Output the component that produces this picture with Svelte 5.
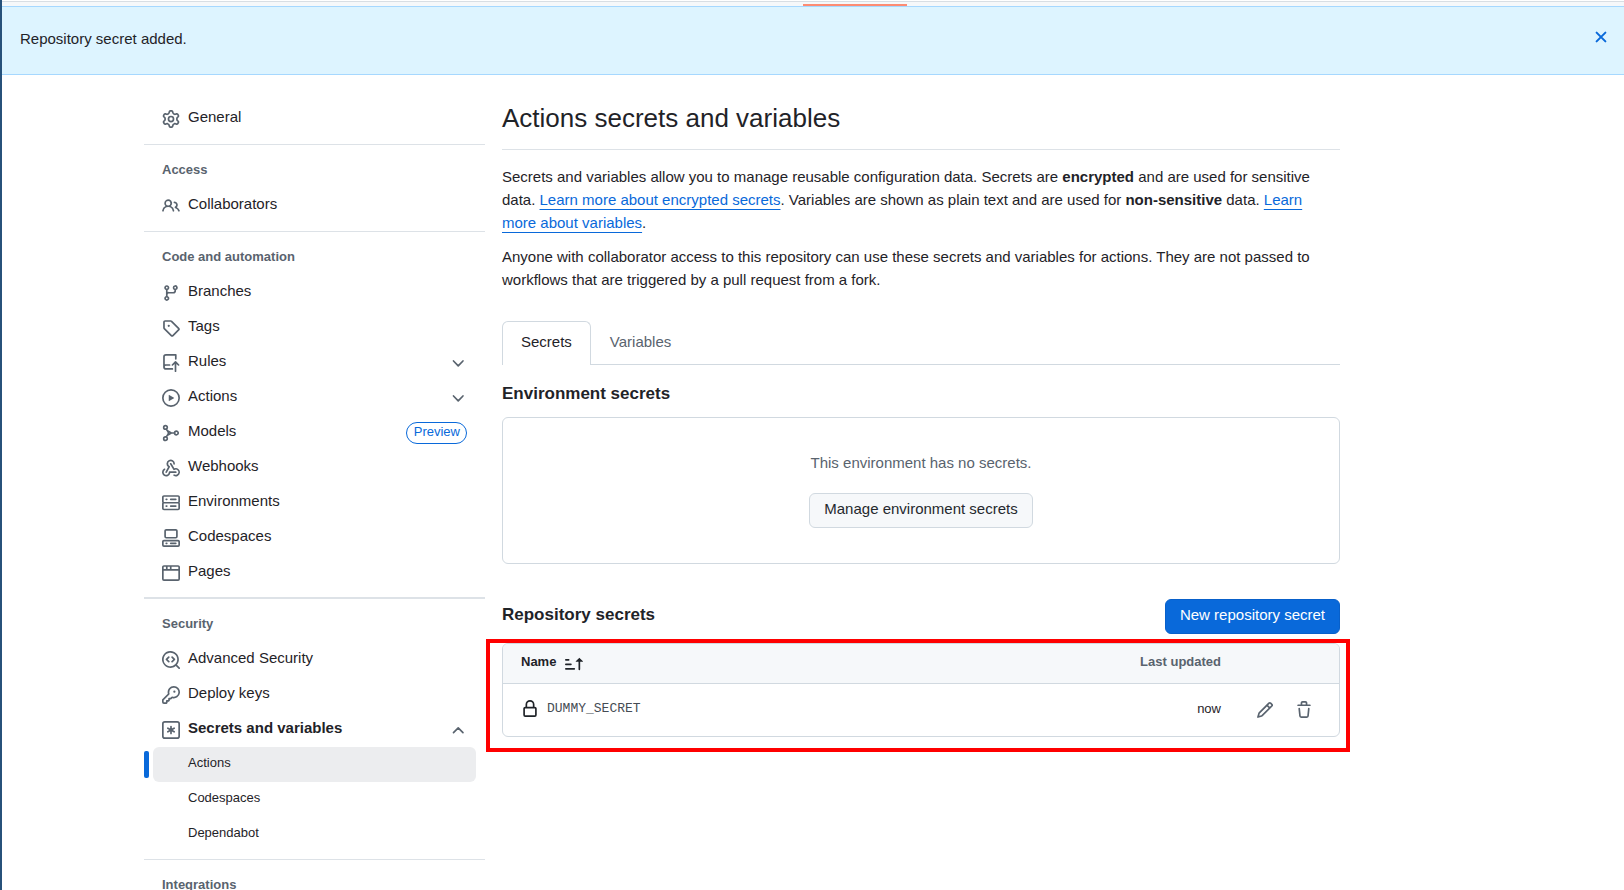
<script>
  const icons = {
    gear: 'M8 0a8.2 8.2 0 0 1 .701.031C9.444.095 9.99.645 10.16 1.29l.288 1.107c.018.066.079.158.212.224.231.114.454.243.668.386.123.082.233.09.299.071l1.103-.303c.644-.176 1.392.021 1.82.63.27.385.506.792.704 1.218.315.675.111 1.422-.364 1.891l-.814.806c-.049.048-.098.147-.088.294.016.257.016.515 0 .772-.01.147.038.246.088.294l.814.806c.475.469.679 1.216.364 1.891a7.977 7.977 0 0 1-.704 1.217c-.428.61-1.176.807-1.82.63l-1.102-.302c-.067-.019-.177-.011-.3.071a5.909 5.909 0 0 1-.668.386c-.133.066-.194.158-.211.224l-.29 1.106c-.168.646-.715 1.196-1.458 1.26a8.006 8.006 0 0 1-1.402 0c-.743-.064-1.289-.614-1.458-1.26l-.289-1.106c-.018-.066-.079-.158-.212-.224a5.738 5.738 0 0 1-.668-.386c-.123-.082-.233-.09-.299-.071l-1.103.303c-.644.176-1.392-.021-1.82-.63a8.12 8.12 0 0 1-.704-1.218c-.315-.675-.111-1.422.363-1.891l.815-.806c.05-.048.098-.147.088-.294a6.214 6.214 0 0 1 0-.772c.01-.147-.038-.246-.088-.294l-.815-.806C.635 6.045.431 5.298.746 4.623a7.92 7.92 0 0 1 .704-1.217c.428-.61 1.176-.807 1.82-.63l1.102.302c.067.019.177.011.3-.071.214-.143.437-.272.668-.386.133-.066.194-.158.211-.224l.29-1.106C6.009.645 6.556.095 7.299.03 7.53.01 7.764 0 8 0Zm-.571 1.525c-.036.003-.108.036-.137.146l-.289 1.105c-.147.561-.549.967-.998 1.189-.173.086-.34.183-.5.29-.417.278-.97.423-1.529.27l-1.103-.303c-.109-.03-.175.016-.195.045-.22.312-.412.644-.573.99-.014.031-.021.11.059.19l.815.806c.411.406.562.957.53 1.456a4.709 4.709 0 0 0 0 .582c.032.499-.119 1.05-.53 1.456l-.815.806c-.081.08-.073.159-.059.19.162.346.353.677.573.989.02.03.085.076.195.046l1.102-.303c.56-.153 1.113-.008 1.53.27.161.107.328.204.501.29.447.222.85.629.997 1.189l.289 1.105c.029.109.101.143.137.146a6.6 6.6 0 0 0 1.142 0c.036-.003.108-.036.137-.146l.289-1.105c.147-.561.549-.967.998-1.189.173-.086.34-.183.5-.29.417-.278.97-.423 1.529-.27l1.103.303c.109.029.175-.016.195-.045.22-.313.411-.644.573-.99.014-.031.021-.11-.059-.19l-.815-.806c-.411-.406-.562-.957-.53-1.456a4.709 4.709 0 0 0 0-.582c-.032-.499.119-1.05.53-1.456l.815-.806c.081-.08.073-.159.059-.19a6.464 6.464 0 0 0-.573-.989c-.02-.03-.085-.076-.195-.046l-1.102.303c-.56.153-1.113.008-1.53-.27a4.44 4.44 0 0 0-.501-.29c-.447-.222-.85-.629-.997-1.189l-.289-1.105c-.029-.11-.101-.143-.137-.146a6.6 6.6 0 0 0-1.142 0ZM11 8a3 3 0 1 1-6 0 3 3 0 0 1 6 0ZM9.5 8a1.5 1.5 0 1 0-3.001.001A1.5 1.5 0 0 0 9.5 8Z',
    people: 'M2 5.5a3.5 3.5 0 1 1 5.898 2.549 5.508 5.508 0 0 1 3.034 4.084.75.75 0 1 1-1.482.235 4 4 0 0 0-7.9 0 .75.75 0 0 1-1.482-.236A5.507 5.507 0 0 1 3.102 8.05 3.493 3.493 0 0 1 2 5.5ZM11 4a3.001 3.001 0 0 1 2.22 5.018 5.01 5.01 0 0 1 2.56 3.012.749.749 0 0 1-.885.954.752.752 0 0 1-.549-.514 3.507 3.507 0 0 0-2.522-2.372.75.75 0 0 1-.574-.73v-.352a.75.75 0 0 1 .416-.672A1.5 1.5 0 0 0 11 5.5.75.75 0 0 1 11 4Zm-5.5-.5a2 2 0 1 0-.001 3.999A2 2 0 0 0 5.5 3.5Z',
    branch: 'M9.5 3.25a2.25 2.25 0 1 1 3 2.122V6A2.5 2.5 0 0 1 10 8.5H6a1 1 0 0 0-1 1v1.128a2.251 2.251 0 1 1-1.5 0V5.372a2.25 2.25 0 1 1 1.5 0v1.836A2.493 2.493 0 0 1 6 7h4a1 1 0 0 0 1-1v-.628A2.25 2.25 0 0 1 9.5 3.25Zm-6 0a.75.75 0 1 0 1.5 0 .75.75 0 0 0-1.5 0Zm8.25-.75a.75.75 0 1 0 0 1.5.75.75 0 0 0 0-1.5ZM4.25 12a.75.75 0 1 0 0 1.5.75.75 0 0 0 0-1.5Z',
    tag: 'M1 7.775V2.75C1 1.784 1.784 1 2.75 1h5.025c.464 0 .91.184 1.238.513l6.25 6.25a1.75 1.75 0 0 1 0 2.474l-5.026 5.026a1.75 1.75 0 0 1-2.474 0l-6.25-6.25A1.752 1.752 0 0 1 1 7.775Zm1.5 0c0 .066.026.13.073.177l6.25 6.25a.25.25 0 0 0 .354 0l5.025-5.025a.25.25 0 0 0 0-.354l-6.25-6.25a.25.25 0 0 0-.177-.073H2.75a.25.25 0 0 0-.25.25ZM6 5a1 1 0 1 1 0 2 1 1 0 0 1 0-2Z',
    push: 'M1 2.5A2.5 2.5 0 0 1 3.5 0h8.75a.75.75 0 0 1 .75.75v3.5a.75.75 0 0 1-1.5 0V1.5h-8a1 1 0 0 0-1 1v6.708A2.493 2.493 0 0 1 3.5 9h3.25a.75.75 0 0 1 0 1.5H3.5a1 1 0 0 0 0 2h5.75a.75.75 0 0 1 0 1.5H3.5A2.5 2.5 0 0 1 1 11.5Zm13.23 7.79-1.48-1.478v6.436a.75.75 0 0 1-1.5 0V8.811L9.77 10.29a.749.749 0 1 1-1.06-1.06l2.76-2.76a.75.75 0 0 1 1.06 0l2.76 2.76a.749.749 0 1 1-1.06 1.06Z',
    play: 'M8 0a8 8 0 1 1 0 16A8 8 0 0 1 8 0ZM1.5 8a6.5 6.5 0 1 0 13 0 6.5 6.5 0 0 0-13 0Zm4.879-2.773 4.264 2.559a.25.25 0 0 1 0 .428l-4.264 2.559A.25.25 0 0 1 6 10.559V5.442a.25.25 0 0 1 .379-.215Z',
    webhook: 'M5.5 4.25a2.25 2.25 0 0 1 4.5 0 .75.75 0 0 0 1.5 0 3.75 3.75 0 1 0-6.14 2.889l-2.272 4.258a.75.75 0 0 0 1.324.706L7 7.25a.75.75 0 0 0-.309-1.015A2.25 2.25 0 0 1 5.5 4.25ZM7.364 3.607a.75.75 0 0 1 1.03.257l2.608 4.349a3.75 3.75 0 1 1-.628 6.785.75.75 0 0 1 .752-1.299 2.25 2.25 0 1 0-.033-3.88.75.75 0 0 1-1.03-.256L7.107 4.636a.75.75 0 0 1 .257-1.03ZM2.9 8.776A.75.75 0 0 1 2.625 9.8 2.25 2.25 0 1 0 6 11.75a.75.75 0 0 1 .75-.751h5.5a.75.75 0 0 1 0 1.5H7.425a3.751 3.751 0 1 1-5.55-3.998.75.75 0 0 1 1.024.274Z',
    server: 'M1.75 1h12.5c.966 0 1.75.784 1.75 1.75v4c0 .372-.116.717-.314 1 .198.283.314.628.314 1v4a1.75 1.75 0 0 1-1.75 1.75H1.75A1.75 1.75 0 0 1 0 12.75v-4c0-.358.109-.707.314-1a1.739 1.739 0 0 1-.314-1v-4C0 1.784.784 1 1.75 1ZM1.5 2.75v4c0 .138.112.25.25.25h12.5a.25.25 0 0 0 .25-.25v-4a.25.25 0 0 0-.25-.25H1.75a.25.25 0 0 0-.25.25Zm.25 5.75a.25.25 0 0 0-.25.25v4c0 .138.112.25.25.25h12.5a.25.25 0 0 0 .25-.25v-4a.25.25 0 0 0-.25-.25ZM7 4.75A.75.75 0 0 1 7.75 4h4.5a.75.75 0 0 1 0 1.5h-4.5A.75.75 0 0 1 7 4.75ZM7.75 10h4.5a.75.75 0 0 1 0 1.5h-4.5a.75.75 0 0 1 0-1.5ZM3 4.75A.75.75 0 0 1 3.75 4h.5a.75.75 0 0 1 0 1.5h-.5A.75.75 0 0 1 3 4.75ZM3.75 10h.5a.75.75 0 0 1 0 1.5h-.5a.75.75 0 0 1 0-1.5Z',
    codespaces: 'M0 11.25c0-.966.784-1.75 1.75-1.75h12.5c.966 0 1.75.784 1.75 1.75v3A1.75 1.75 0 0 1 14.25 16H1.75A1.75 1.75 0 0 1 0 14.25Zm2-9.5C2 .784 2.784 0 3.75 0h8.5C13.216 0 14 .784 14 1.75v5a1.75 1.75 0 0 1-1.75 1.75h-8.5A1.75 1.75 0 0 1 2 6.75Zm1.75-.25a.25.25 0 0 0-.25.25v5c0 .138.112.25.25.25h8.5a.25.25 0 0 0 .25-.25v-5a.25.25 0 0 0-.25-.25Zm-2 9.5a.25.25 0 0 0-.25.25v3c0 .138.112.25.25.25h12.5a.25.25 0 0 0 .25-.25v-3a.25.25 0 0 0-.25-.25ZM7 12.75a.75.75 0 0 1 .75-.75h4.5a.75.75 0 0 1 0 1.5h-4.5a.75.75 0 0 1-.75-.75Zm-4 0a.75.75 0 0 1 .75-.75h.5a.75.75 0 0 1 0 1.5h-.5a.75.75 0 0 1-.75-.75Z',
    browser: 'M0 2.75C0 1.784.784 1 1.75 1h12.5c.966 0 1.75.784 1.75 1.75v10.5A1.75 1.75 0 0 1 14.25 15H1.75A1.75 1.75 0 0 1 0 13.25ZM14.5 6h-13v7.25c0 .138.112.25.25.25h12.5a.25.25 0 0 0 .25-.25Zm-6-3.5v2h6V2.75a.25.25 0 0 0-.25-.25ZM5 2.5v2h2v-2Zm-3.25 0a.25.25 0 0 0-.25.25V4.5h2v-2Z',
    codescan: 'M8.47 4.97a.75.75 0 0 0 0 1.06L9.94 7.5 8.47 8.97a.75.75 0 1 0 1.06 1.06l2-2a.75.75 0 0 0 0-1.06l-2-2a.75.75 0 0 0-1.06 0ZM6.53 6.03a.75.75 0 0 0-1.06-1.06l-2 2a.75.75 0 0 0 0 1.06l2 2a.75.75 0 1 0 1.06-1.06L5.06 7.5l1.47-1.47ZM12.246 13.307a7.501 7.501 0 1 1 1.06-1.06l2.474 2.473a.749.749 0 1 1-1.06 1.06l-2.474-2.473ZM1.5 7.5a6.002 6.002 0 0 0 3.608 5.504 6.002 6.002 0 0 0 6.486-1.117.748.748 0 0 1 .292-.293A6 6 0 1 0 1.5 7.5Z',
    key: 'M10.5 0a5.499 5.499 0 1 1-1.288 10.848l-.932.932a.749.749 0 0 1-.53.22H7v.75a.749.749 0 0 1-.22.53l-.5.5a.749.749 0 0 1-.53.22H5v.75a.749.749 0 0 1-.22.53l-.5.5a.749.749 0 0 1-.53.22h-2A1.75 1.75 0 0 1 0 14.25v-2c0-.199.079-.389.22-.53l4.932-4.932A5.5 5.5 0 0 1 10.5 0Zm-4 5.5c-.001.431.069.86.205 1.269a.75.75 0 0 1-.181.768L1.5 12.56v1.69c0 .138.112.25.25.25h1.69l.06-.06v-1.19a.75.75 0 0 1 .75-.75h1.19l.06-.06v-1.19a.75.75 0 0 1 .75-.75h1.19l1.023-1.025a.75.75 0 0 1 .768-.18A4 4 0 1 0 6.5 5.5ZM11 6a1 1 0 1 1 0-2 1 1 0 0 1 0 2Z',
    lock: 'M4 4a4 4 0 0 1 8 0v2h.25c.966 0 1.75.784 1.75 1.75v5.5A1.75 1.75 0 0 1 12.25 15h-8.5A1.75 1.75 0 0 1 2 13.25v-5.5C2 6.784 2.784 6 3.75 6H4Zm8.25 3.5h-8.5a.25.25 0 0 0-.25.25v5.5c0 .138.112.25.25.25h8.5a.25.25 0 0 0 .25-.25v-5.5a.25.25 0 0 0-.25-.25ZM10.5 6V4a2.5 2.5 0 1 0-5 0v2Z',
    pencil: 'M11.013 1.427a1.75 1.75 0 0 1 2.474 0l1.086 1.086a1.75 1.75 0 0 1 0 2.474l-8.61 8.61c-.21.21-.47.364-.756.445l-3.251.93a.75.75 0 0 1-.927-.928l.929-3.25c.081-.286.235-.547.445-.758l8.61-8.61Zm.176 4.823L9.75 4.81l-6.286 6.287a.253.253 0 0 0-.064.108l-.558 1.953 1.953-.558a.253.253 0 0 0 .108-.064Zm1.238-3.763a.25.25 0 0 0-.354 0L10.811 3.75l1.439 1.44 1.263-1.263a.25.25 0 0 0 0-.354Z',
    trash: 'M11 1.75V3h2.25a.75.75 0 0 1 0 1.5H2.75a.75.75 0 0 1 0-1.5H5V1.75C5 .784 5.784 0 6.75 0h2.5C10.216 0 11 .784 11 1.75ZM4.496 6.675l.66 6.6a.25.25 0 0 0 .249.225h5.19a.25.25 0 0 0 .249-.225l.66-6.6a.75.75 0 0 1 1.492.149l-.66 6.6A1.748 1.748 0 0 1 10.595 15h-5.19a1.75 1.75 0 0 1-1.741-1.575l-.66-6.6a.75.75 0 1 1 1.492-.15ZM6.5 1.75V3h3V1.75a.25.25 0 0 0-.25-.25h-2.5a.25.25 0 0 0-.25.25Z',
    sort: 'm12.927 2.573 3 3A.25.25 0 0 1 15.75 6H13.5v6.75a.75.75 0 0 1-1.5 0V6H9.75a.25.25 0 0 1-.177-.427l3-3a.25.25 0 0 1 .354 0ZM0 12.25a.75.75 0 0 1 .75-.75h7.5a.75.75 0 0 1 0 1.5H.75a.75.75 0 0 1-.75-.75Zm0-4a.75.75 0 0 1 .75-.75h4.5a.75.75 0 0 1 0 1.5H.75A.75.75 0 0 1 0 8.25Zm0-4a.75.75 0 0 1 .75-.75h2.5a.75.75 0 0 1 0 1.5H.75A.75.75 0 0 1 0 4.25Z'
  };

  const strokes = {
    model: 'M4.7 3a1.6 1.6 0 1 1-3.2 0 1.6 1.6 0 0 1 3.2 0ZM4.7 13a1.6 1.6 0 1 1-3.2 0 1.6 1.6 0 0 1 3.2 0ZM14.4 8a1.6 1.6 0 1 1-3.2 0 1.6 1.6 0 0 1 3.2 0ZM5.6 6.3v3.4L8.2 8ZM3.9 4.6l1.7 2.6M3.9 11.4l1.7-2.6M8.2 8h3',
    asterisk: 'M2.5.75h11c.97 0 1.75.78 1.75 1.75v11c0 .97-.78 1.75-1.75 1.75h-11c-.97 0-1.75-.78-1.75-1.75v-11C.75 1.53 1.53.75 2.5.75ZM8 4.9v6.2M5.2 6.4l5.6 3.2M10.8 6.4l-5.6 3.2',
    down: 'm4 6.2 4.2 4.3 4.2-4.3',
    up: 'm4 10.4 4.2-4.3 4.2 4.3',
    close: 'm4.1 4.1 7.8 7.8M11.9 4.1l-7.8 7.8'
  };

  const sections = [
    { items: [{ label: 'General', icon: 'gear' }] },
    { title: 'Access', items: [{ label: 'Collaborators', icon: 'people' }] },
    {
      title: 'Code and automation',
      items: [
        { label: 'Branches', icon: 'branch' },
        { label: 'Tags', icon: 'tag' },
        { label: 'Rules', icon: 'push', toggle: 'down' },
        { label: 'Actions', icon: 'play', toggle: 'down' },
        { label: 'Models', icon: 'model', badge: 'Preview' },
        { label: 'Webhooks', icon: 'webhook' },
        { label: 'Environments', icon: 'server' },
        { label: 'Codespaces', icon: 'codespaces' },
        { label: 'Pages', icon: 'browser' }
      ]
    },
    {
      title: 'Security',
      heavy: true,
      items: [
        { label: 'Advanced Security', icon: 'codescan' },
        { label: 'Deploy keys', icon: 'key' },
        {
          label: 'Secrets and variables',
          icon: 'asterisk',
          toggle: 'up',
          children: ['Actions', 'Codespaces', 'Dependabot']
        }
      ]
    },
    { title: 'Integrations', items: [] }
  ];

  const secrets = [{ name: 'DUMMY_SECRET', updated: 'now' }];
</script>

{#snippet icon(name)}
  <svg class="icon" viewBox="0 0 16 16" aria-hidden="true">
    {#if strokes[name]}
      <path class="line" d={strokes[name]} />
    {:else}
      <path d={icons[name]} />
    {/if}
  </svg>
{/snippet}

<div class="page">
  <div class="tabstrip"><span class="current"></span></div>

  <div class="flash" role="status">
    <span>Repository secret added.</span>
    <button class="dismiss" aria-label="Dismiss this message">{@render icon('close')}</button>
  </div>

  <div class="layout">
    <nav class="sidebar" aria-label="Repository settings">
      {#each sections as section}
        <section class:heavy={section.heavy}>
          {#if section.title}<h3>{section.title}</h3>{/if}
          <ul>
            {#each section.items as item}
              <li>
                {#if item.toggle}
                  <button class="item" class:open={item.children} aria-expanded={!!item.children}>
                    {@render icon(item.icon)}
                    <span class="label">{item.label}</span>
                    {@render icon(item.toggle)}
                  </button>
                {:else}
                  <a class="item" href="#{item.icon}">
                    {@render icon(item.icon)}
                    <span class="label">{item.label}</span>
                    {#if item.badge}<span class="badge">{item.badge}</span>{/if}
                  </a>
                {/if}
                {#if item.children}
                  <ul>
                    {#each item.children as child, i}
                      <li><a class="sub" class:active={i === 0} href="#{child}">{child}</a></li>
                    {/each}
                  </ul>
                {/if}
              </li>
            {/each}
          </ul>
        </section>
      {/each}
    </nav>

    <main>
      <h1>Actions secrets and variables</h1>
      <p>
        Secrets and variables allow you to manage reusable configuration data. Secrets are
        <strong>encrypted</strong> and are used for sensitive data.
        <a href="#encrypted">Learn more about encrypted secrets</a>. Variables are shown as plain text
        and are used for <strong>non-sensitive</strong> data.
        <a href="#variables">Learn more about variables</a>.
      </p>
      <p>
        Anyone with collaborator access to this repository can use these secrets and variables for
        actions. They are not passed to workflows that are triggered by a pull request from a fork.
      </p>

      <div class="tabs" role="tablist">
        <button class="tab selected" role="tab" aria-selected="true">Secrets</button>
        <button class="tab" role="tab" aria-selected="false">Variables</button>
      </div>

      <h2>Environment secrets</h2>
      <div class="blank">
        <span>This environment has no secrets.</span>
        <button class="btn">Manage environment secrets</button>
      </div>

      <div class="subhead">
        <h2>Repository secrets</h2>
        <button class="btn primary">New repository secret</button>
      </div>

      <div class="highlight">
        <div class="box">
          <table>
            <thead>
              <tr>
                <th><button class="sort">Name {@render icon('sort')}</button></th>
                <th class="updated">Last updated</th>
                <th class="actions"></th>
              </tr>
            </thead>
            <tbody>
              {#each secrets as secret}
                <tr>
                  <td><div class="name">{@render icon('lock')}<code>{secret.name}</code></div></td>
                  <td class="updated">{secret.updated}</td>
                  <td class="actions">
                    <div class="tools">
                      <button aria-label="Edit {secret.name}">{@render icon('pencil')}</button>
                      <button aria-label="Delete {secret.name}">{@render icon('trash')}</button>
                    </div>
                  </td>
                </tr>
              {/each}
            </tbody>
          </table>
        </div>
      </div>
    </main>
  </div>
</div>

<style>
  :global(body) {
    margin: 0;
    overflow: hidden;
    background: #fff;
  }
  .page {
    box-sizing: border-box;
    height: 100vh;
    overflow: hidden;
    border-left: 2px solid #27517a;
    color: #1f2328;
    font: 15px/23px 'Liberation Sans', Arial, sans-serif;
  }
  .page :global(*) {
    box-sizing: border-box;
  }
  button {
    padding: 0;
    border: 0;
    background: none;
    color: inherit;
    font: inherit;
    cursor: pointer;
  }
  ul {
    margin: 0;
    padding: 0;
    list-style: none;
  }
  .icon {
    flex: none;
    display: block;
    width: 18px;
    height: 18px;
    fill: currentColor;
  }
  .line {
    fill: none;
    stroke: currentColor;
    stroke-width: 1.5;
    stroke-linecap: round;
    stroke-linejoin: round;
  }

  .tabstrip {
    display: flex;
    justify-content: center;
    align-items: flex-end;
    height: 5px;
    margin-top: 1px;
    border-top: 1px solid #d8dee4;
    background: #f6f8fa;
  }
  .current {
    width: 104px;
    height: 2px;
    margin-left: 84px;
    background: #fd8c73;
  }
  .flash {
    display: flex;
    justify-content: space-between;
    align-items: flex-start;
    padding: 20px 14px 24px 18px;
    border: solid #a6d8ff;
    border-width: 1px 0;
    background: #ddf4ff;
  }
  .dismiss {
    padding-top: 1px;
    color: #0969da;
  }
  .dismiss .line {
    stroke-width: 1.8;
  }

  .layout {
    display: grid;
    grid-template-columns: 341px minmax(0, 838px);
    gap: 17px;
    max-width: 1408px;
    margin: 0 auto;
    padding: 26px 35px;
  }

  section + section {
    margin-top: 8px;
    border-top: 1px solid #dde2e7;
  }
  section.heavy {
    margin-top: 7px;
    border-top-width: 2px;
  }
  section.heavy + section {
    margin-top: 7px;
  }
  h3 {
    margin: 0;
    padding: 13px 18px 7px;
    color: #59636e;
    font-size: 13px;
    line-height: 23px;
  }
  .item {
    display: flex;
    align-items: center;
    gap: 8px;
    width: 100%;
    height: 35px;
    padding: 0 18px;
    color: inherit;
    text-align: left;
    text-decoration: none;
  }
  .item .icon {
    color: #59636e;
  }
  .label {
    flex: 1;
    padding-bottom: 4px;
  }
  .open .label {
    font-weight: 700;
  }
  .badge {
    height: 22px;
    padding: 0 6px 0 7px;
    border: 1px solid #0969da;
    border-radius: 11px;
    color: #0969da;
    font-size: 13px;
    line-height: 18px;
  }
  .sub {
    display: block;
    position: relative;
    height: 35px;
    margin: 0 9px;
    padding: 0 35px;
    border-radius: 6px;
    color: inherit;
    font-size: 13px;
    line-height: 31px;
    text-decoration: none;
  }
  .active {
    background: #ecedef;
  }
  .active::before {
    content: '';
    position: absolute;
    top: 4px;
    left: -9px;
    width: 5px;
    height: 27px;
    border-radius: 2px;
    background: #0969da;
  }

  h1 {
    margin: 0 0 15px;
    padding-bottom: 13px;
    border-bottom: 1px solid #dde2e7;
    font-size: 26px;
    font-weight: 400;
    line-height: 35px;
  }
  p {
    margin: 0 0 11px;
  }
  p a {
    color: #0969da;
    text-decoration: underline;
    text-underline-offset: 4px;
  }
  .tabs {
    display: flex;
    margin: 30px 0 17px;
    border-bottom: 1px solid #d1d9e0;
  }
  .tab {
    height: 43px;
    padding: 0 18px 4px;
    border: 1px solid transparent;
    border-bottom: 0;
    color: #59636e;
  }
  .selected {
    margin-bottom: -1px;
    height: 44px;
    padding-bottom: 5px;
    border-color: #d1d9e0;
    border-radius: 6px 6px 0 0;
    background: #fff;
    color: #1f2328;
  }
  h2 {
    margin: 0;
    font-size: 17px;
    line-height: 23px;
  }
  .blank {
    display: flex;
    flex-direction: column;
    align-items: center;
    gap: 19px;
    margin: 12px 0 35px;
    padding: 33px 34px 35px;
    border: 1px solid #d1d9e0;
    border-radius: 6px;
    color: #59636e;
  }
  .btn {
    height: 35px;
    padding: 0 14px 4px;
    border: 1px solid #d1d9e0;
    border-radius: 6px;
    background: #f6f8fa;
    color: #25292e;
  }
  .primary {
    border-color: #0860ca;
    background: #0969da;
    color: #fff;
  }
  .subhead {
    display: flex;
    justify-content: space-between;
    align-items: flex-start;
  }
  .subhead h2 {
    padding-top: 4px;
  }

  .highlight {
    margin: 5px -10px 0 -16px;
    padding: 0 6px 11px 12px;
    border: 4px solid #f00;
  }
  .box {
    overflow: hidden;
    border: 1px solid #d1d9e0;
    border-radius: 6px;
  }
  table {
    width: 100%;
    border-collapse: collapse;
    font-size: 13px;
  }
  th,
  td {
    padding: 0 18px;
    text-align: left;
  }
  th {
    height: 39px;
    padding-bottom: 4px;
    border-bottom: 1px solid #d1d9e0;
    background: #f6f8fa;
  }
  td {
    height: 53px;
    padding-bottom: 2px;
  }
  .sort {
    display: flex;
    align-items: flex-end;
    gap: 9px;
  }
  .updated {
    padding-right: 0;
    text-align: right;
  }
  th.updated {
    color: #59636e;
  }
  .actions {
    width: 118px;
    padding-bottom: 0;
  }
  .name,
  .tools {
    display: flex;
    align-items: center;
  }
  .name {
    gap: 8px;
  }
  code {
    color: #454c54;
    font: 13px/23px 'Liberation Mono', monospace;
  }
  .tools {
    justify-content: space-between;
    padding: 0 8px 0 17px;
    color: #59636e;
  }
</style>
